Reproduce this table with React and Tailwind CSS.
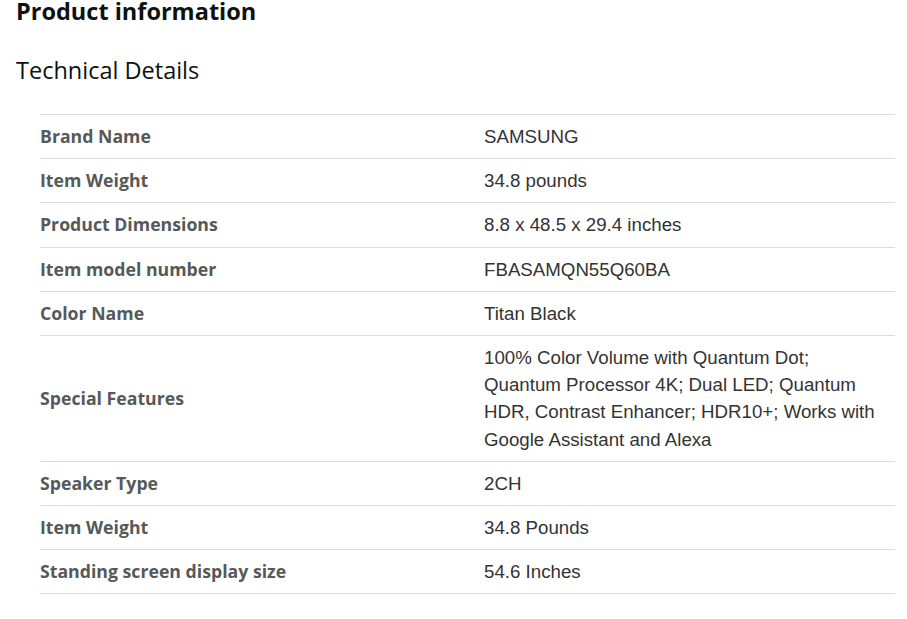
import React from 'react';

const rows = [
  ['Brand Name', 'SAMSUNG'],
  ['Item Weight', '34.8 pounds'],
  ['Product Dimensions', '8.8 x 48.5 x 29.4 inches'],
  ['Item model number', 'FBASAMQN55Q60BA'],
  ['Color Name', 'Titan Black'],
  [
    'Special Features',
    '100% Color Volume with Quantum Dot; Quantum Processor 4K; Dual LED; Quantum HDR, Contrast Enhancer; HDR10+; Works with Google Assistant and Alexa',
  ],
  ['Speaker Type', '2CH'],
  ['Item Weight', '34.8 Pounds'],
  ['Standing screen display size', '54.6 Inches'],
];

const App = () => {
  return (
    <div className="min-h-screen bg-white pl-4 pr-3">
      <h2 className="text-[23.5px] leading-[22px] font-bold text-[#0f1111] font-['Open_Sans',sans-serif]">
        Product information
      </h2>

      <h3 className="mt-[34px] text-[23.5px] leading-[28px] text-[#0f1111] font-['Open_Sans',sans-serif]">
        Technical Details
      </h3>

      {/* Details table */}
      <div className="mt-[30px] ml-6 border-t border-[#dcdcdc]">
        {rows.map(([label, value], i) => (
          <div key={i} className="flex items-center border-b border-[#dcdcdc] py-2">
            <div className="w-[444px] shrink-0 text-[17.7px] leading-[27.2px] font-bold text-[#565959] font-['Open_Sans',sans-serif]">
              {label}
            </div>
            <div className="flex-1 pr-3 text-[18.7px] leading-[27.2px] text-[#333] font-['Liberation_Sans',Arial,sans-serif]">
              {value}
            </div>
          </div>
        ))}
      </div>
    </div>
  );
};

export default App;
